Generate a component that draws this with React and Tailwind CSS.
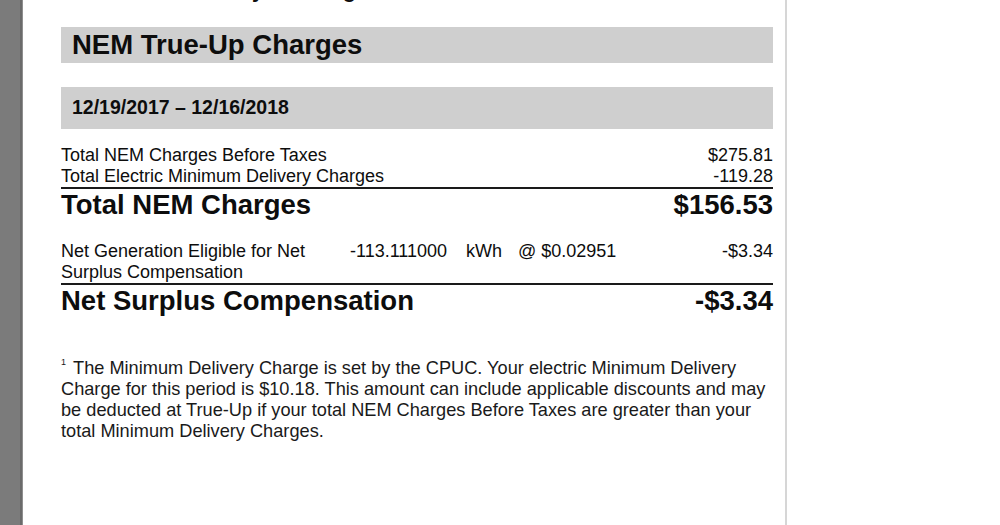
const font = { fontFamily: '"Liberation Sans", Arial, sans-serif' };

function AmountRow({ label, amount, className = "" }) {
  return (
    <div className={`flex justify-between text-[18px] leading-[21px] ${className}`}>
      <span>{label}</span>
      <span>{amount}</span>
    </div>
  );
}

function TotalRow({ label, amount, className = "" }) {
  return (
    <div className={`flex justify-between text-[27.5px] font-bold leading-[30px] ${className}`}>
      <span>{label}</span>
      <span>{amount}</span>
    </div>
  );
}

export default function App() {
  return (
    <div className="flex h-[525px] w-[1000px] overflow-hidden bg-white text-[#0d0d0d]" style={font}>
      {/* left viewer edge */}
      <div className="flex h-full shrink-0">
        <div className="h-full w-[20px] bg-[#7b7b7b]" />
        <div className="h-full w-[2px] bg-[#6b6b6b]" />
        <div className="h-full w-[1px] bg-[#8e8e8e]" />
      </div>

      {/* page */}
      <div className="h-full w-[762px] shrink-0 pl-[38px]">
        <div className="w-[712px]">
          <div className="mt-[-21px] h-[24px] pl-[107px] text-[21px] font-bold leading-[24px]">
            Summary of Charges
          </div>

          <div className="mt-[24px] flex h-[36px] items-center bg-[#cfcfcf] pl-[11px]">
            <h2 className="text-[27.5px] font-bold leading-none">NEM True-Up Charges</h2>
          </div>

          <div className="mt-[24px] flex h-[42px] items-center bg-[#cfcfcf] pl-[11px]">
            <span className="text-[19.5px] font-bold leading-none">12/19/2017 – 12/16/2018</span>
          </div>

          <div className="mt-[15px]">
            <AmountRow label="Total NEM Charges Before Taxes" amount="$275.81" className="h-[22px] leading-[22px]" />
            <AmountRow label="Total Electric Minimum Delivery Charges" amount="-119.28" />
            <div className="h-[2px] bg-[#1a1a1a]" />
            <TotalRow label="Total NEM Charges" amount="$156.53" className="mt-[1px]" />
          </div>

          <div className="mt-[21px] flex text-[18px] leading-[21px]">
            <div className="w-[289px]">
              Net Generation Eligible for Net
              <br />
              Surplus Compensation
            </div>
            <span className="w-[116px]">-113.111000</span>
            <span className="w-[52px]">kWh</span>
            <span className="flex-1">@ $0.02951</span>
            <span>-$3.34</span>
          </div>
          <div className="h-[2px] bg-[#1a1a1a]" />
          <TotalRow label="Net Surplus Compensation" amount="-$3.34" className="mt-[1px]" />

          <div className="mt-[42px] text-[18.2px] leading-[21px] text-[#1a1a1a]">
            <div className="whitespace-nowrap">
              <sup className="relative top-[-9px] mr-[7px] text-[9px]">1</sup>
              The Minimum Delivery Charge is set by the CPUC. Your electric Minimum Delivery
            </div>
            <div className="whitespace-nowrap">
              Charge for this period is $10.18. This amount can include applicable discounts and may
            </div>
            <div className="whitespace-nowrap">
              be deducted at True-Up if your total NEM Charges Before Taxes are greater than your
            </div>
            <div className="whitespace-nowrap">total Minimum Delivery Charges.</div>
          </div>
        </div>
      </div>

      {/* page edge */}
      <div className="h-full w-[2px] shrink-0 bg-[#d6d6d6]" />
      <div className="h-full flex-1 bg-white" />
    </div>
  );
}
